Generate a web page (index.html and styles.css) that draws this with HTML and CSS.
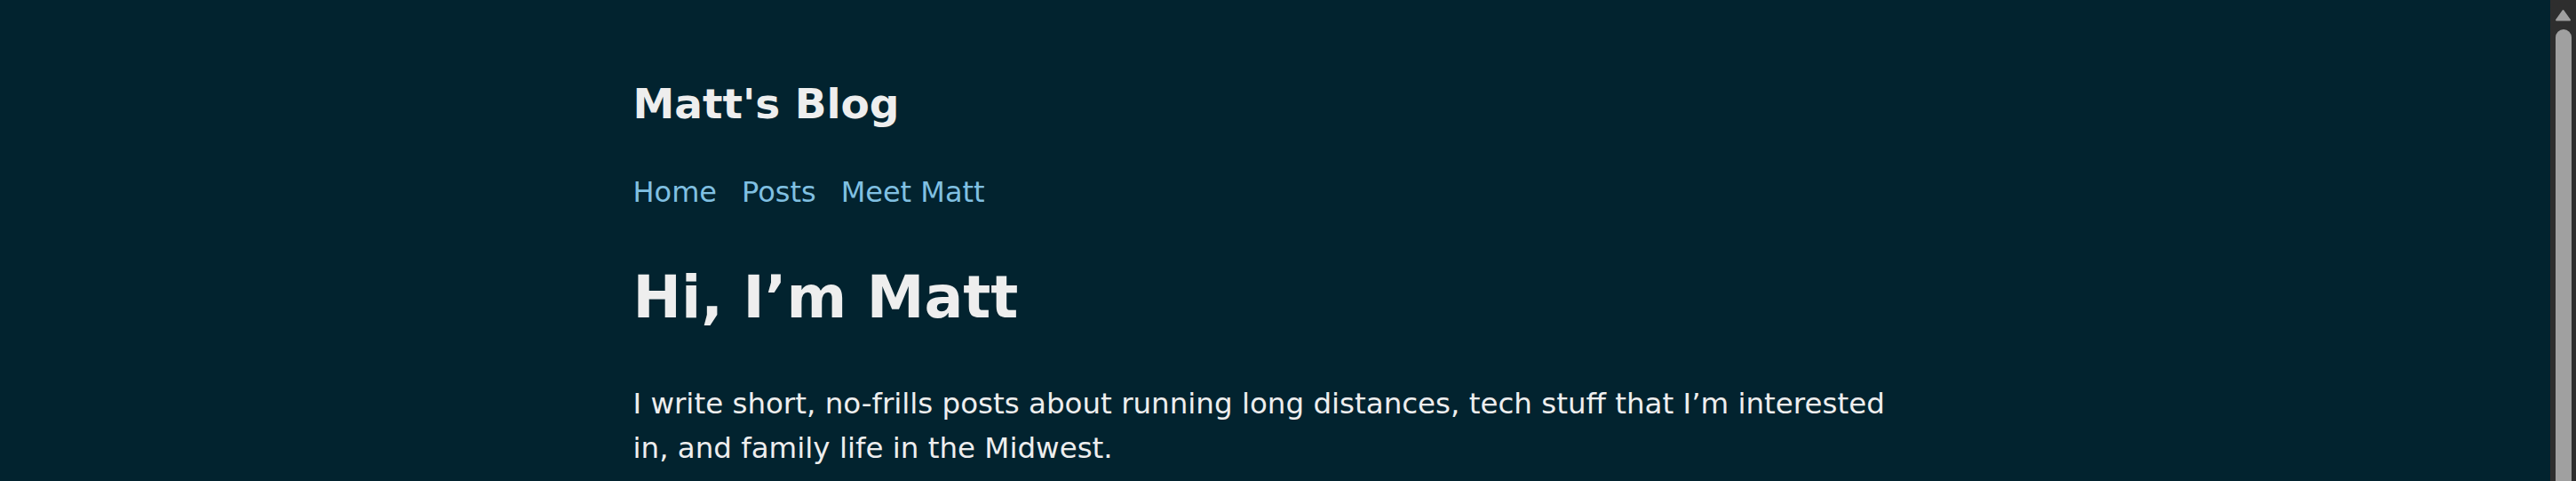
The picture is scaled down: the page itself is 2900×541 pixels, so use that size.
FILE: index.html
```html
<!DOCTYPE html>
<html lang="en">
<head>
<meta charset="utf-8">
<title>Matt's Blog</title>
<link rel="stylesheet" href="styles.css">
</head>
<body>
  <div class="wrap">
    <header class="site-header">
      <a class="site-title" href="#">Matt's Blog</a>
      <nav class="site-nav">
        <a href="#">Home</a>
        <a href="#">Posts</a>
        <a href="#">Meet Matt</a>
      </nav>
    </header>
    <main class="content">
      <h1 class="page-title">Hi, I’m Matt</h1>
      <p class="intro">I write short, no-frills posts about running long distances, tech stuff that I’m interested in, and family life in the Midwest.</p>
    </main>
  </div>
  <div class="scrollbar" aria-hidden="true">
    <svg class="scroll-arrow" width="29" height="29" viewBox="0 0 29 29">
      <path d="M14.5 12 L22 22.5 L7 22.5 Z" fill="#a0a0a0" stroke="#a0a0a0" stroke-width="2" stroke-linejoin="round"/>
    </svg>
    <div class="scroll-thumb"></div>
  </div>
</body>
</html>
```

FILE: styles.css
```css
html {
  background: #02232f;
}
body {
  margin: 0;
  padding-right: 29px;
  background: #02232f;
  color: #eeeeee;
  font-family: "DejaVu Sans", Verdana, sans-serif;
}
.wrap {
  max-width: 1446px;
  margin: 0 auto;
  padding-top: 90px;
}
.site-header {
  display: flex;
  flex-direction: column;
  gap: 48px;
}
.site-title {
  color: #eeeeee;
  text-decoration: none;
  font-weight: bold;
  font-size: 47px;
  line-height: 54px;
}
.site-nav {
  display: flex;
  gap: 28px;
  font-size: 32px;
  line-height: 48px;
}
.site-nav a {
  color: #80c0e2;
  text-decoration: none;
}
.page-title {
  margin: 56px 0 0;
  font-size: 65px;
  line-height: 78px;
  font-weight: bold;
}
.intro {
  margin: 55px 0 0;
  font-size: 32.5px;
  line-height: 50px;
}
.scrollbar {
  position: fixed;
  top: 0;
  right: 0;
  bottom: 0;
  width: 29px;
  background: #2e2e2e;
  display: flex;
  flex-direction: column;
  align-items: center;
  gap: 4px;
}
.scroll-arrow {
  display: block;
  flex: none;
}
.scroll-thumb {
  flex: 1;
  width: 18px;
  margin-left: 1px;
  background: #a0a0a0;
  border-radius: 9px 9px 0 0;
}
```
